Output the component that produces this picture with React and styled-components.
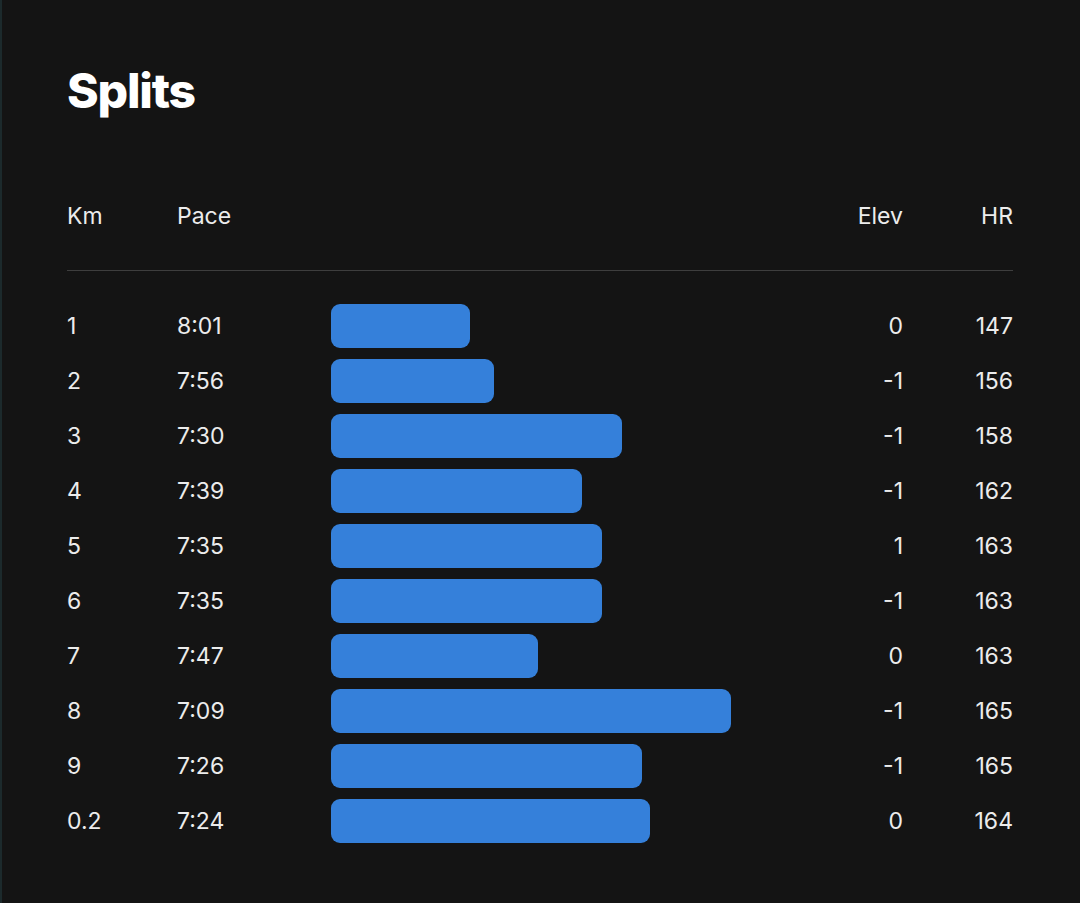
import React from 'react';
import styled, { createGlobalStyle } from 'styled-components';

const GlobalStyle = createGlobalStyle`
  html, body {
    margin: 0;
    padding: 0;
    background-color: #141414;
  }
  body {
    font-family: Inter, "Noto Sans", sans-serif;
    color: #ececec;
  }
`;

const Page = styled.div`
  min-height: 903px;
  box-sizing: border-box;
  padding: 62px 67px 40px 65px;
  border-left: 2px solid #1c2a2c;
`;

const Title = styled.h1`
  margin: 0;
  font-size: 48px;
  font-weight: 800;
  letter-spacing: -1.2px;
  color: #ffffff;
  line-height: 58px;
`;

const Table = styled.div`
  margin-top: 74px;
`;

const Row = styled.div`
  display: grid;
  grid-template-columns: 110px 154px 1fr 110px 110px;
  align-items: center;
  height: ${(p) => (p.head ? '44px' : '55px')};
  font-size: 23px;
  font-weight: 400;
`;

const Divider = styled.div`
  height: 1px;
  background-color: #3e3e3e;
  margin: 32px 0 27px;
`;

const Cell = styled.div`
  text-align: ${(p) => (p.right ? 'right' : 'left')};
`;

const Bar = styled.div`
  height: 44px;
  border-radius: 9px;
  background-color: #3580da;
`;

const splits = [
  { km: '1', pace: '8:01', bar: 139, elev: '0', hr: 147 },
  { km: '2', pace: '7:56', bar: 163, elev: '-1', hr: 156 },
  { km: '3', pace: '7:30', bar: 291, elev: '-1', hr: 158 },
  { km: '4', pace: '7:39', bar: 251, elev: '-1', hr: 162 },
  { km: '5', pace: '7:35', bar: 271, elev: '1', hr: 163 },
  { km: '6', pace: '7:35', bar: 271, elev: '-1', hr: 163 },
  { km: '7', pace: '7:47', bar: 207, elev: '0', hr: 163 },
  { km: '8', pace: '7:09', bar: 400, elev: '-1', hr: 165 },
  { km: '9', pace: '7:26', bar: 311, elev: '-1', hr: 165 },
  { km: '0.2', pace: '7:24', bar: 319, elev: '0', hr: 164 },
];

export default function App() {
  return (
    <Page>
      <GlobalStyle />
      <Title>Splits</Title>
      <Table>
        <Row head>
          <Cell>Km</Cell>
          <Cell>Pace</Cell>
          <Cell />
          <Cell right>Elev</Cell>
          <Cell right>HR</Cell>
        </Row>
        <Divider />
        {splits.map((s) => (
          <Row key={s.km}>
            <Cell>{s.km}</Cell>
            <Cell>{s.pace}</Cell>
            <div>
              <Bar style={{ width: s.bar }} />
            </div>
            <Cell right>{s.elev}</Cell>
            <Cell right>{s.hr}</Cell>
          </Row>
        ))}
      </Table>
    </Page>
  );
}
